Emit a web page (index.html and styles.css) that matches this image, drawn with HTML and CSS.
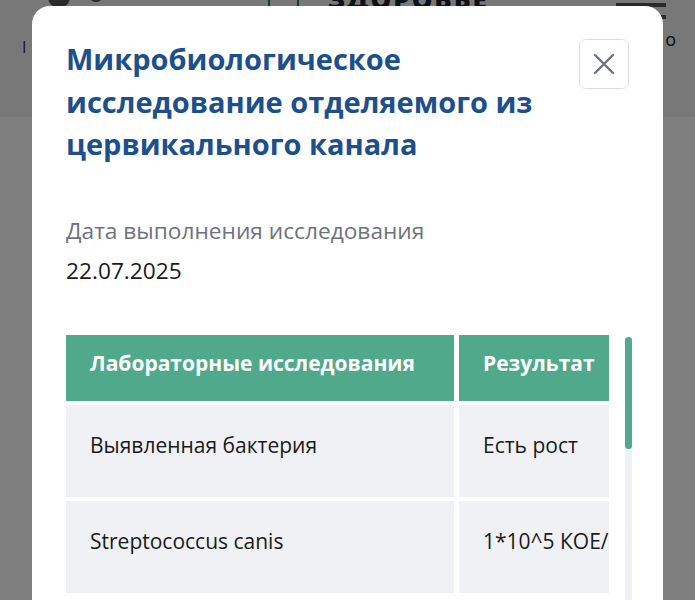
FILE: index.html
```html
<!DOCTYPE html>
<html lang="ru">
<head>
<meta charset="utf-8">
<link rel="stylesheet" href="styles.css">
</head>
<body>
<div class="page">
  <header class="site-header">
    <div class="logo-dots"><span class="dot"></span><span class="dot dot-small"></span></div>
    <div class="side-mark">I</div>
    <div class="divider divider-a"></div>
    <div class="divider divider-b"></div>
    <div class="brand">ЗДОРОВЬЕ</div>
    <div class="menu">
      <span class="menu-line"></span>
      <span class="menu-line"></span>
      <span class="menu-label">о</span>
    </div>
  </header>
</div>

<div class="overlay">
  <div class="modal">
    <div class="modal-head">
      <h1 class="modal-title">Микробиологическое исследование отделяемого из цервикального канала</h1>
      <button class="close-btn" aria-label="Закрыть">
        <svg width="22" height="22" viewBox="0 0 22 22"><path d="M2 2 L20 20 M20 2 L2 20" stroke="#6c737d" stroke-width="2.4" stroke-linecap="round" fill="none"/></svg>
      </button>
    </div>

    <div class="field">
      <div class="field-label">Дата выполнения исследования</div>
      <div class="field-value">22.07.2025</div>
    </div>

    <div class="table-area">
      <div class="table-wrap">
        <div class="grid">
          <div class="th">Лабораторные исследования</div>
          <div class="th">Результат</div>
          <div class="td">Выявленная бактерия</div>
          <div class="td">Есть рост</div>
          <div class="td">Streptococcus canis</div>
          <div class="td">1*10^5 КОЕ/мл</div>
        </div>
      </div>
      <div class="scrollbar"><div class="thumb"></div></div>
    </div>
  </div>
</div>
</body>
</html>
```
FILE: styles.css
```css
* { box-sizing: border-box; }
html, body { margin: 0; padding: 0; }
body {
  width: 695px;
  height: 600px;
  overflow: hidden;
  background: #ffffff;
  font-family: "Open Sans", "Noto Sans", sans-serif;
}
.page { height: 600px; }
.site-header {
  height: 117px;
  background: #f1f1f1;
  display: flex;
  align-items: flex-start;
  position: relative;
}
.logo-dots { display: flex; gap: 18px; margin-left: 48px; margin-top: -14px; }
.dot { width: 22px; height: 22px; border-radius: 50%; background: #555; display: block; }
.dot-small { width: 16px; height: 16px; }
.side-mark { position: absolute; left: 22px; top: 36px; font-size: 16px; color: #333; }
.divider { width: 2px; height: 46px; background: #2a7a5a; }
.divider-a { margin-left: 164px; }
.divider-b { margin-left: 27px; }
.brand {
  margin-left: 29px;
  margin-top: -17px;
  font-weight: 800;
  font-size: 26px;
  line-height: 32px;
  letter-spacing: 2px;
  color: #1b2530;
}
.menu { margin-left: auto; margin-right: 29px; display: flex; flex-direction: column; gap: 8px; align-items: flex-end; padding-top: 3px; }
.menu-line { width: 50px; height: 4px; background: #555; display: block; }
.menu-label { font-size: 18px; line-height: 20px; color: #222; margin-right: -10px; margin-top: 2px; }

.overlay {
  position: fixed;
  inset: 0;
  background: rgba(0, 0, 0, 0.5);
  padding: 6px 32px 0 32px;
}
.modal {
  width: 631px;
  height: 700px;
  background: #ffffff;
  border-radius: 18px;
  padding: 32px 34px 0 34px;
}
.modal-head {
  display: flex;
  align-items: flex-start;
  gap: 24px;
}
.modal-title {
  flex: 1;
  margin: 0;
  font-size: 29px;
  line-height: 42.5px;
  font-weight: 700;
  color: #1d4f8c;
}
.close-btn {
  flex: none;
  width: 50px;
  height: 50px;
  margin-top: 1px;
  border: 1.5px solid #dcdee2;
  border-radius: 7px;
  background: #fff;
  display: flex;
  align-items: center;
  justify-content: center;
  padding: 0;
}
.field { margin-top: 45px; }
.field-label {
  font-size: 22.7px;
  line-height: 40px;
  color: #6c737d;
}
.field-value {
  font-size: 22.7px;
  line-height: 40px;
  color: #1a1a1a;
}
.table-area {
  margin-top: 44px;
  display: flex;
  gap: 16px;
}
.table-wrap {
  width: 543px;
  overflow: hidden;
  flex: none;
}
.grid {
  display: grid;
  grid-template-columns: 388px 220px;
  gap: 4px 5px;
  width: 613px;
}
.th {
  background: #4fa98a;
  color: #ffffff;
  font-weight: 700;
  font-size: 21px;
  height: 66px;
  padding: 0 24px 10px 24px;
  display: flex;
  align-items: center;
  white-space: nowrap;
}
.td {
  background: #f0f1f4;
  color: #1a1a1a;
  font-size: 21px;
  line-height: 26px;
  height: 92px;
  padding: 27px 24px 0 24px;
  white-space: nowrap;
}
.scrollbar {
  width: 7px;
  height: 300px;
  margin-top: 2px;
  background: #f0f1f4;
  border-radius: 4px;
  flex: none;
}
.thumb {
  height: 112px;
  background: #4fa98a;
  border-radius: 4px;
}
```
